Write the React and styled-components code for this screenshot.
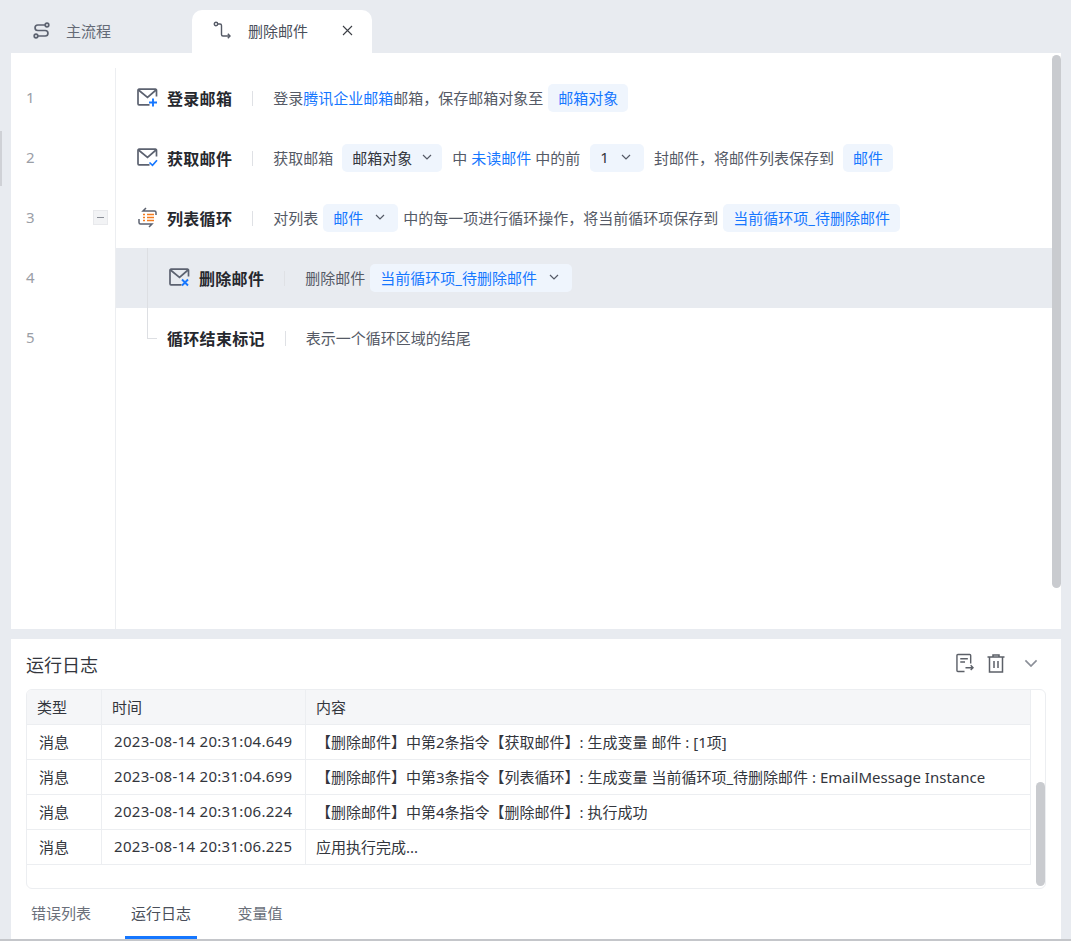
import React from "react";
import styled, { createGlobalStyle } from "styled-components";

const GlobalStyle = createGlobalStyle`
  html, body {
    margin: 0;
    padding: 0;
    background: #e8ebf0;
  }
  body {
    font-family: "Noto Sans", "Noto Sans CJK SC", sans-serif;
    font-size: 15px;
    color: #555a66;
  }
  * {
    box-sizing: border-box;
  }
`;

const Page = styled.div`
  width: 1071px;
  height: 941px;
  display: flex;
  flex-direction: column;
  overflow: hidden;
  position: relative;
  border-bottom: 2px solid #c4c6ca;
`;

const SideHandle = styled.div`
  position: absolute;
  left: 0;
  top: 131px;
  width: 2px;
  height: 55px;
  background: #cfd1d6;
`;

const TabBar = styled.div`
  height: 53px;
  padding: 10px 0 0 11px;
  display: flex;
  flex-shrink: 0;
`;

const Tab = styled.div`
  width: ${(p) => (p.$active ? "180px" : "181px")};
  height: 43px;
  display: flex;
  align-items: center;
  padding: 0 ${(p) => (p.$active ? "19px" : "0")} 3px ${(p) => (p.$active ? "21px" : "22px")};
  border-radius: 10px 10px 0 0;
  background: ${(p) => (p.$active ? "#fff" : "transparent")};
  color: ${(p) => (p.$active ? "#4a4f5a" : "#646a76")};
  font-size: 15px;
  svg {
    flex-shrink: 0;
  }
`;

const TabLabel = styled.span`
  margin-left: 16px;
  flex: ${(p) => (p.$active ? 1 : "none")};
`;

const Editor = styled.div`
  height: 576px;
  margin: 0 10px 10px 11px;
  padding-top: 15px;
  background: #fff;
  position: relative;
  flex-shrink: 0;
`;

const ScrollThumb = styled.div`
  position: absolute;
  right: 0;
  top: 2px;
  width: 9px;
  height: 533px;
  border-radius: 5px;
  background: #c9cbcf;
  z-index: 1;
`;

const Rows = styled.div`
  height: 561px;
  display: flex;
  flex-direction: column;
  position: relative;
`;

const GutterLine = styled.div`
  position: absolute;
  left: 104px;
  top: 0;
  bottom: 0;
  width: 1px;
  background: #eceef1;
`;

const Row = styled.div`
  height: 60px;
  display: flex;
  align-items: center;
  position: relative;
`;

const LineNo = styled.div`
  width: 105px;
  padding: 0 0 2px 15px;
  color: #9a9ea6;
  font-size: 15px;
  position: relative;
  flex-shrink: 0;
`;

const Collapse = styled.div`
  position: absolute;
  left: 82px;
  top: 3px;
  width: 15px;
  height: 15px;
  background: #f2f3f5;
  border: 1px solid #e8e9ec;
  display: flex;
  align-items: center;
  justify-content: center;
  &::before {
    content: "";
    width: 7px;
    height: 1px;
    background: #8b8f98;
  }
`;

const RowBody = styled.div`
  flex: 1;
  height: 60px;
  display: flex;
  align-items: center;
  padding-left: ${(p) => p.$left || "20px"};
  background: ${(p) => (p.$selected ? "#e8ebf0" : "transparent")};
  position: relative;
`;

const TreeStem = styled.div`
  position: absolute;
  left: 31px;
  top: 0;
  width: ${(p) => (p.$end ? "10px" : "1px")};
  height: ${(p) => (p.$end ? "31px" : "60px")};
  border-left: 1px solid #dddfe3;
  border-bottom: ${(p) => (p.$end ? "1px solid #dddfe3" : "none")};
`;

const IconSlot = styled.div`
  width: 22px;
  height: 22px;
  margin: 0 9px 2px 0;
  flex-shrink: 0;
  display: flex;
  align-items: center;
  justify-content: center;
`;

const Title = styled.div`
  font-size: 16px;
  font-weight: 700;
  color: #26282e;
  letter-spacing: 0.3px;
  white-space: nowrap;
`;

const Divider = styled.div`
  width: 1px;
  height: 15px;
  background: #dfe1e5;
  margin: 0 20px;
  flex-shrink: 0;
`;

const Desc = styled.div`
  display: flex;
  align-items: center;
  white-space: nowrap;
  font-size: 15px;
  color: #555a66;
  margin-bottom: 2px;
`;

const Link = styled.span`
  color: #1677ff;
  margin: ${(p) => p.$gap || "0"};
`;

const Chip = styled.span`
  height: 28px;
  display: inline-flex;
  align-items: center;
  padding: 0 ${(p) => p.$pr || "10px"} 2px 10px;
  border-radius: 5px;
  background: #eff5fd;
  color: ${(p) => (p.$dark ? "#33363d" : "#1677ff")};
  margin: ${(p) => p.$gap || "0 5px"};
  margin-top: 2px;
  svg {
    margin-left: ${(p) => p.$arrowGap || "10px"};
  }
`;

const LogPanel = styled.div`
  height: 300px;
  margin: 0 10px 0 11px;
  background: #fff;
  padding: 0 15px;
  display: flex;
  flex-direction: column;
  flex-shrink: 0;
`;

const LogHeader = styled.div`
  height: 50px;
  display: flex;
  align-items: center;
  flex-shrink: 0;
`;

const LogTitle = styled.div`
  flex: 1;
  font-size: 18px;
  color: #33363d;
`;

const LogTools = styled.div`
  display: flex;
  align-items: center;
  gap: 13px;
  margin: 0 8px 2px 0;
`;

const CollapseToggle = styled.span`
  display: flex;
  margin-left: 6px;
`;

const TableFrame = styled.div`
  height: 200px;
  border: 1px solid #eceef1;
  border-radius: 6px;
  position: relative;
  overflow: hidden;
  flex-shrink: 0;
`;

const Table = styled.div`
  width: 1004px;
  display: flex;
  flex-direction: column;
`;

const TableRow = styled.div`
  height: 35px;
  display: grid;
  grid-template-columns: 75px 204px 1fr;
  border-bottom: 1px solid #eceef1;
  border-right: 1px solid #eceef1;
  background: ${(p) => (p.$head ? "#f5f6f8" : "#fff")};
`;

const Cell = styled.div`
  display: flex;
  align-items: center;
  padding-left: ${(p) => (p.$head ? "10px" : p.$first ? "12px" : "10px")};
  padding-bottom: 2px;
  border-right: ${(p) => (p.$last ? "none" : "1px solid #eceef1")};
  color: #33363d;
  font-size: 15px;
  white-space: nowrap;
`;

const TimeCell = styled(Cell)`
  padding-left: ${(p) => (p.$head ? "10px" : "12px")};
  letter-spacing: ${(p) => (p.$head ? "0" : "0.3px")};
`;

const LogThumb = styled.div`
  position: absolute;
  right: 0;
  top: 92px;
  width: 9px;
  height: 104px;
  border-radius: 5px;
  background: #c9cbcf;
`;

const BottomTabs = styled.div`
  flex: 1;
  display: flex;
  align-items: stretch;
`;

const BottomTab = styled.div`
  width: ${(p) => p.$w};
  margin-right: ${(p) => p.$mr || "0"};
  display: flex;
  align-items: center;
  justify-content: center;
  color: ${(p) => (p.$active ? "#4a4f5a" : "#6a6f7a")};
  border-bottom: 3px solid ${(p) => (p.$active ? "#1677ff" : "transparent")};
  font-size: 15px;
`;

const Chevron = ({ color = "#555a66", size = 10 }) => (
  <svg width={size} height={size * 0.6} viewBox="0 0 10 6" fill="none">
    <path d="M1 1l4 4 4-4" stroke={color} strokeWidth="1.2" />
  </svg>
);

const MainFlowIcon = () => (
  <svg width="17" height="17" viewBox="0 0 17 17" fill="none" stroke="#5c6270" strokeWidth="1.7">
    <circle cx="14" cy="3" r="1.8" />
    <circle cx="3" cy="14" r="1.8" />
    <path d="M12.2 3H4.8a2.7 2.7 0 0 0 0 5.5h7.4a2.7 2.7 0 0 1 0 5.5H4.8" />
  </svg>
);

const SubFlowIcon = () => (
  <svg width="19" height="19" viewBox="0 0 19 19" fill="none" stroke="#555a66" strokeWidth="1.4">
    <circle cx="3" cy="3" r="1.7" />
    <path d="M4.7 3h2.3c1 0 1.5.6 1.5 1.5v9c0 1 .6 1.5 1.5 1.5H17" />
    <path d="M14.8 12.8L17 15l-2.2 2.2" />
  </svg>
);

const CloseIcon = () => (
  <svg width="11" height="11" viewBox="0 0 11 11" fill="none" stroke="#3c3f46" strokeWidth="1.1">
    <path d="M1 1l9 9M10 1l-9 9" />
  </svg>
);

const MailBase = () => (
  <>
    <path
      d="M19.5 8.5V2.2a1 1 0 0 0-1-1H2a1 1 0 0 0-1 1v13.6a1 1 0 0 0 1 1h10.5"
      stroke="#5c6270"
      strokeWidth="1.7"
      fill="none"
    />
    <path d="M1.5 2l9 7.5L19 2" stroke="#5c6270" strokeWidth="1.7" fill="none" />
  </>
);

const MailPlus = () => (
  <svg width="21" height="19" viewBox="0 0 21 19">
    <MailBase />
    <path d="M16 10.5v8M12 14.5h8" stroke="#1677ff" strokeWidth="1.9" fill="none" />
  </svg>
);

const MailCheck = () => (
  <svg width="21" height="19" viewBox="0 0 21 19">
    <MailBase />
    <path d="M12.5 14.5l3 2.8 4.5-5" stroke="#1677ff" strokeWidth="1.7" fill="none" />
  </svg>
);

const MailCross = () => (
  <svg width="21" height="19" viewBox="0 0 21 19">
    <MailBase />
    <path d="M13 11.5l6 6M19 11.5l-6 6" stroke="#1677ff" strokeWidth="1.9" fill="none" />
  </svg>
);

const LoopIcon = () => (
  <svg width="21" height="21" viewBox="0 0 21 21" fill="none">
    <path d="M9 1L6 4h11.5a1.5 1.5 0 0 1 1.5 1.5V8" stroke="#5c6270" strokeWidth="1.5" />
    <path d="M12 20l3-3H3.5A1.5 1.5 0 0 1 2 15.5V12" stroke="#5c6270" strokeWidth="1.5" />
    <path d="M6 7.5h2M10 7.5h7M6 10.5h2M10 10.5h7M6 13.5h2M10 13.5h7" stroke="#f57c1f" strokeWidth="1.5" />
  </svg>
);

const ExportIcon = () => (
  <svg width="18" height="20" viewBox="0 0 19 21" fill="none" stroke="#5c6068" strokeWidth="1.5">
    <path d="M15.5 11V2.5a1 1 0 0 0-1-1H2a1 1 0 0 0-1 1v16a1 1 0 0 0 1 1h7" />
    <path d="M4.5 6h8M4.5 9.5h5" />
    <path d="M10 15.5h8M15.5 13l2.5 2.5-2.5 2.5" />
  </svg>
);

const TrashIcon = () => (
  <svg width="18" height="19" viewBox="0 0 18 19" fill="none" stroke="#5c6068" strokeWidth="1.5">
    <path d="M0.5 3h17M6 3V1h6v2" />
    <path d="M2.5 3v15h13V3" />
    <path d="M7 7v7M11 7v7" />
  </svg>
);

const logRows = [
  ["消息", "2023-08-14 20:31:04.649", "【删除邮件】中第2条指令【获取邮件】: 生成变量 邮件 : [1项]"],
  ["消息", "2023-08-14 20:31:04.699", "【删除邮件】中第3条指令【列表循环】: 生成变量 当前循环项_待删除邮件 : EmailMessage Instance"],
  ["消息", "2023-08-14 20:31:06.224", "【删除邮件】中第4条指令【删除邮件】: 执行成功"],
  ["消息", "2023-08-14 20:31:06.225", "应用执行完成..."],
];

const App = () => {
  return (
    <Page>
      <GlobalStyle />
      <SideHandle />
      <TabBar>
        <Tab>
          <MainFlowIcon />
          <TabLabel>主流程</TabLabel>
        </Tab>
        <Tab $active>
          <SubFlowIcon />
          <TabLabel $active>删除邮件</TabLabel>
          <CloseIcon />
        </Tab>
      </TabBar>

      <Editor>
        <ScrollThumb />
        <Rows>
          <GutterLine />
          <Row>
            <LineNo>1</LineNo>
            <RowBody>
              <IconSlot><MailPlus /></IconSlot>
              <Title>登录邮箱</Title>
              <Divider />
              <Desc>
                登录<Link>腾讯企业邮箱</Link>邮箱，保存邮箱对象至
                <Chip>邮箱对象</Chip>
              </Desc>
            </RowBody>
          </Row>
          <Row>
            <LineNo>2</LineNo>
            <RowBody>
              <IconSlot><MailCheck /></IconSlot>
              <Title>获取邮件</Title>
              <Divider />
              <Desc>
                获取邮箱
                <Chip $dark $gap="0 10px 0 9px">
                  邮箱对象
                  <Chevron />
                </Chip>
                中<Link $gap="0 4px">未读邮件</Link>中的前
                <Chip $dark $gap="0 10px" $arrowGap="12px" $pr="13px">
                  1
                  <Chevron />
                </Chip>
                封邮件，将邮件列表保存到
                <Chip $gap="0 9px">邮件</Chip>
              </Desc>
            </RowBody>
          </Row>
          <Row>
            <LineNo>
              3
              <Collapse />
            </LineNo>
            <RowBody>
              <IconSlot><LoopIcon /></IconSlot>
              <Title>列表循环</Title>
              <Divider />
              <Desc>
                对列表
                <Chip $gap="0 5px" $arrowGap="12px" $pr="13px">
                  邮件
                  <Chevron />
                </Chip>
                中的每一项进行循环操作，将当前循环项保存到
                <Chip>当前循环项_待删除邮件</Chip>
              </Desc>
            </RowBody>
          </Row>
          <Row>
            <LineNo>4</LineNo>
            <RowBody $left="52px" $selected>
              <TreeStem />
              <IconSlot><MailCross /></IconSlot>
              <Title>删除邮件</Title>
              <Divider />
              <Desc>
                删除邮件
                <Chip $arrowGap="12px" $pr="13px">
                  当前循环项_待删除邮件
                  <Chevron />
                </Chip>
              </Desc>
            </RowBody>
          </Row>
          <Row>
            <LineNo>5</LineNo>
            <RowBody $left="51px">
              <TreeStem $end />
              <Title>循环结束标记</Title>
              <Divider />
              <Desc>表示一个循环区域的结尾</Desc>
            </RowBody>
          </Row>
        </Rows>
      </Editor>

      <LogPanel>
        <LogHeader>
          <LogTitle>运行日志</LogTitle>
          <LogTools>
            <ExportIcon />
            <TrashIcon />
            <CollapseToggle>
              <Chevron color="#8b8f98" size={14} />
            </CollapseToggle>
          </LogTools>
        </LogHeader>
        <TableFrame>
          <Table>
            <TableRow $head>
              <Cell $head>类型</Cell>
              <TimeCell $head>时间</TimeCell>
              <Cell $head $last>内容</Cell>
            </TableRow>
            {logRows.map((r) => (
              <TableRow key={r[1]}>
                <Cell $first>{r[0]}</Cell>
                <TimeCell>{r[1]}</TimeCell>
                <Cell $last>{r[2]}</Cell>
              </TableRow>
            ))}
          </Table>
          <LogThumb />
        </TableFrame>
        <BottomTabs>
          <BottomTab $w="70px" $mr="29px">错误列表</BottomTab>
          <BottomTab $w="72px" $mr="28px" $active>运行日志</BottomTab>
          <BottomTab $w="70px">变量值</BottomTab>
        </BottomTabs>
      </LogPanel>
    </Page>
  );
};

export default App;
